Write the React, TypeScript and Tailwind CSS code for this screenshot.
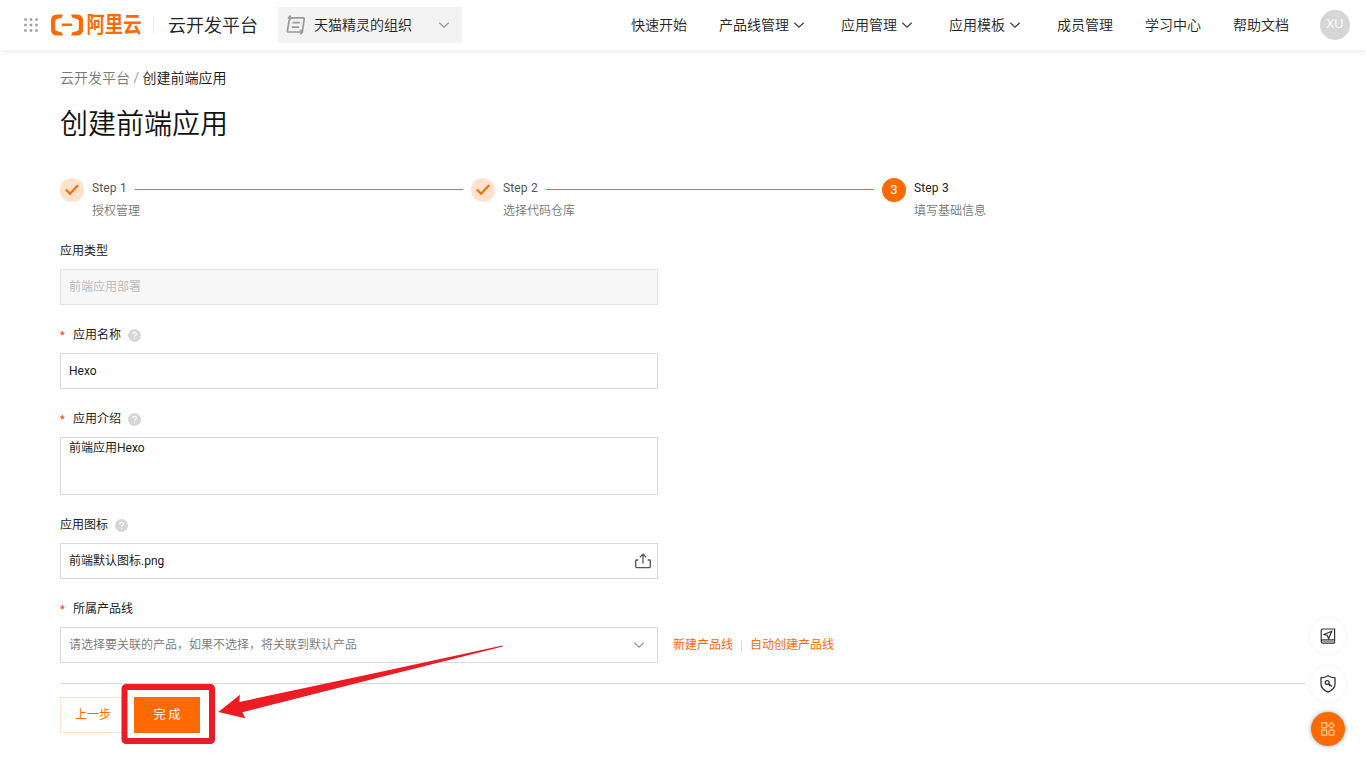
import type { ReactNode } from 'react'

const navItems = [
    { label: '快速开始', menu: false },
    { label: '产品线管理', menu: true },
    { label: '应用管理', menu: true },
    { label: '应用模板', menu: true },
    { label: '成员管理', menu: false },
    { label: '学习中心', menu: false },
    { label: '帮助文档', menu: false },
]

const steps = [
    { title: 'Step 1', desc: '授权管理', done: true },
    { title: 'Step 2', desc: '选择代码仓库', done: true },
    { title: 'Step 3', desc: '填写基础信息', done: false },
]

const dots = [1.5, 7, 12.5]

const Chevron = ({ className }: { className: string }) => (
    <svg className={className} width="12" height="8" viewBox="0 0 12 8" fill="none" stroke="currentColor" strokeWidth="1.3">
        <path d="M1.3 1.7 6 6.200l4.700-4.500" />
    </svg>
)

const Help = () => (
    <svg className="ml-[7px]" width="13" height="13" viewBox="0 0 13 13" fill="none">
        <circle cx="6.5" cy="6.5" r="6.5" fill="#d6d6d6" />
        <path d="M4.7 5.2c0-2.4 3.7-2.3 3.7-.2 0 1.3-1.8 1.4-1.8 2.8" stroke="#fff" strokeWidth="1.2" />
        <circle cx="6.6" cy="9.6" r=".7" fill="#fff" />
    </svg>
)

const Header = () => {
    return (
        <header className="flex h-[50px] items-center bg-white pl-6 pr-4 font-[350] shadow-[0_2px_6px_rgba(0,0,0,0.08)]">
            <svg width="14" height="14" viewBox="0 0 14 14" fill="#9b9b9b">
                {dots.map((y) => dots.map((x) => <rect key={`${x}-${y}`} x={x - 1.3} y={y - 1.3} width="2.6" height="2.6" rx=".9" />))}
            </svg>
            <svg className="ml-[13px]" width="32" height="22" viewBox="0 0 32 22" fill="#ff6a00">
                <path d="M12 .5H5.500A5.500 5.500 0 0 0 0 6v10a5.500 5.500 0 0 0 5.500 5.500H12l-1.400-3.200-4.600-1.200A2.300 2.300 0 0 1 4.200 15V7A2.300 2.300 0 0 1 6 4.900l4.600-1.200z" />
                <path d="M20 .5h6.500A5.500 5.500 0 0 1 32 6v10a5.500 5.500 0 0 1-5.500 5.500H20l1.400-3.200 4.600-1.200a2.300 2.300 0 0 0 1.800-2.100V7A2.300 2.300 0 0 0 26 4.900l-4.600-1.200z" />
                <rect x="10.800" y="9.500" width="10.400" height="2.600" />
            </svg>
            <div className="ml-1 text-[18px] leading-6 font-bold text-[#ff6a00]">
                <span className="inline-block scale-x-[1.02] scale-y-[1.18]">阿里云</span>
            </div>
            <div className="ml-3 h-4 w-px bg-[#ececec]" />
            <div className="ml-3.5 pt-px text-[18px] leading-6 text-[#222]">云开发平台</div>
            <div className="ml-5 flex h-9 w-[184px] items-center bg-[#f3f3f3] pl-2 pr-3 text-sm text-[#222]">
                <svg width="20" height="20" viewBox="0 0 20 20" fill="none" stroke="#999" strokeWidth="1.700" strokeLinejoin="round">
                    <path d="M4.700.7 2.500 2.900l2.200 2.100M2.700 2.900h14.500q1.200 0 1 1.200l-1.900 12.900M6.500 7.700h7.200M5.700 12.200H13M3.200 5 1.400 15.800q-.2 1.200 1 1.200h14M14.300 14.900l2.200 2.100-2.200 2.200" />
                </svg>
                <span className="ml-2">天猫精灵的组织</span>
                <Chevron className="ml-auto text-[#999]" />
            </div>
            <nav className="ml-auto flex items-center gap-8 text-sm text-[#222]">
                {navItems.map((item) => (
                    <div key={item.label} className="flex items-center">
                        {item.label}
                        {item.menu && <Chevron className="mx-1 text-[#444]" />}
                    </div>
                ))}
            </nav>
            <div className="ml-[31px] h-[30px] w-[30px] rounded-full bg-[#d6d6d6] text-center font-['Open_Sans',sans-serif] text-[13px] leading-[27px] font-normal text-white">XU</div>
        </header>
    )
}

const Steps = () => {
    return (
        <div className="mt-8 flex">
            {steps.map((step, i) => (
                <div key={step.title} className="flex w-[411px] items-start">
                    {step.done ? (
                        <div className="mt-px flex h-6 w-6 shrink-0 items-center justify-center rounded-full bg-[#ffe1cc]">
                            <svg width="14" height="12" viewBox="0 0 14 12" fill="none" stroke="#ff6a00" strokeWidth="2.200" strokeLinecap="round">
                                <path d="m1.500 6.200 3.600 3.500 7.400-8" />
                            </svg>
                        </div>
                    ) : (
                        <div className="mt-px h-6 w-6 shrink-0 rounded-full bg-[#ff6a00] text-center text-[13px] leading-6 text-white">{i + 1}</div>
                    )}
                    <div className="ml-2 flex-1">
                        <div className="flex h-[22px] items-center">
                            <span className={step.done ? 'tracking-[0.15px] text-[#555]' : 'tracking-[0.15px] text-[#222]'}>{step.title}</span>
                            {step.done && <div className="mx-2 mt-[3px] h-px flex-1 bg-[#ff6a00]" />}
                        </div>
                        <div className="leading-6 font-[350] text-[#777]">{step.desc}</div>
                    </div>
                </div>
            ))}
        </div>
    )
}

type FieldProps = { label: string; required?: boolean; help?: boolean; children: ReactNode }

const Field = ({ label, required, help, children }: FieldProps) => {
    return (
        <div className="mb-5">
            <div className="mb-2 flex h-5 items-center text-[#222]">
                {required && <span className="mr-2 w-[5px] pt-0.5 text-[11px] text-[#ff3000]">*</span>}
                {label}
                {help && <Help />}
            </div>
            {children}
        </div>
    )
}

const Form = () => {
    return (
        <div className="mt-[18px]">
            <Field label="应用类型">
                <div className="flex h-9 w-[598px] items-center border border-[#e3e3e3] bg-[#f7f7f7] px-2 text-[#bbb]">前端应用部署</div>
            </Field>
            <Field label="应用名称" required help>
                <div className="flex h-9 w-[598px] items-center border border-[#d9d9d9] px-2 text-[#222]">Hexo</div>
            </Field>
            <Field label="应用介绍" required help>
                <div className="h-[58px] w-[598px] border border-[#d9d9d9] px-2 leading-5 text-[#222]">前端应用Hexo</div>
            </Field>
            <Field label="应用图标" help>
                <div className="flex h-9 w-[598px] items-center justify-between border border-[#d9d9d9] pl-2 pr-1.5 text-[#222]">
                    前端默认图标.png
                    <svg width="16" height="16" viewBox="0 0 16 16" fill="none" stroke="#555" strokeWidth="1.300">
                        <path d="M3.300 7H1.500A.8.800 0 0 0 .7 7.800v5.700c0 .7.400 1.100 1.100 1.100h12.400c.7 0 1.100-.4 1.100-1.100V7.800a.8.800 0 0 0-.8-.8h-1.800M8 10.500V1.200M4.900 4.200 8 1.100l3.100 3.100" />
                    </svg>
                </div>
            </Field>
            <Field label="所属产品线" required>
                <div className="flex items-center">
                    <div className="flex h-9 w-[598px] items-center justify-between border border-[#d9d9d9] pl-2 pr-3 font-[350] text-[#777]">
                        请选择要关联的产品，如果不选择，将关联到默认产品
                        <Chevron className="text-[#999]" />
                    </div>
                    <a className="ml-[15px] text-[#ff6a00]">新建产品线</a>
                    <div className="mx-2 mt-0.5 h-3 w-px bg-[#d9d9d9]" />
                    <a className="text-[#ff6a00]">自动创建产品线</a>
                </div>
            </Field>
        </div>
    )
}

const Marker = () => {
    return (
        <svg className="pointer-events-none absolute left-[118px] top-[640px]" width="390" height="108" viewBox="118 640 390 108">
            <rect x="124.500" y="687" width="87.500" height="54" rx="1.500" fill="none" stroke="#ed1c24" strokeWidth="6" />
            <path d="M218.300 712 240 694.700l-.7 7.300L380 672l122.500-26.500.5 1L380 677.300l-137.600 35 2.900 5.900z" fill="#ed1c24" />
        </svg>
    )
}

const FloatingTools = () => {
    return (
        <div className="absolute top-[618px] right-5 flex flex-col items-center">
            <div className="flex h-9 w-9 items-center justify-center rounded-full bg-white shadow-[0_0_4px_rgba(0,0,0,0.07)]">
                <svg width="16" height="16" viewBox="0 0 16 16" fill="none" stroke="#333" strokeWidth="1.200">
                    <path d="M14.600 11.800V1H3C1.800 1 1.200 1.600 1.200 2.800v10.700c0 1 .6 1.700 1.800 1.700h11.600M1.200 13.300c0-1 .7-1.500 1.800-1.500h11.600v3.400" />
                    <path d="M2.500 13.500h12" stroke="#999" />
                    <path d="m11.700 3.300-7.600 3.200 3.300 1 1.200 3.300z" />
                </svg>
            </div>
            <div className="mt-3 flex h-9 w-9 items-center justify-center rounded-full bg-white shadow-[0_0_4px_rgba(0,0,0,0.07)]">
                <svg width="16" height="18" viewBox="0 0 16 18" fill="none" stroke="#333" strokeWidth="1.300">
                    <path d="M8 .8c2 1.300 4.300 2 7 2.100v6.300c0 3.600-2.600 6-7 8-4.400-2-7-4.400-7-8V2.900C3.700 2.800 6 2.100 8 .8z" />
                    <circle cx="7.200" cy="7.500" r="1.900" />
                    <path d="m8.600 8.800 3.400 2.800M10 10l-.8 1" />
                </svg>
            </div>
            <div className="mt-2.5 flex h-[34px] w-[34px] items-center justify-center rounded-full bg-[#ff6a00] shadow-[0_0_4px_rgba(0,80,130,0.5)]">
                <svg width="14" height="14" viewBox="0 0 14 14" fill="none" stroke="#ffc18c" strokeWidth="1.400">
                    <rect x=".7" y=".7" width="5" height="5" rx=".5" />
                    <path d="m10.500.5 2.900 2.900-2.900 2.900-2.900-2.900z" />
                    <rect x=".7" y="8.300" width="5" height="5" rx=".5" />
                    <rect x="8.100" y="8.300" width="5" height="5" rx="1" />
                </svg>
            </div>
        </div>
    )
}

const App = () => {
    return (
        <div className="relative h-screen overflow-hidden bg-white font-[Roboto,'Noto_Sans_CJK_SC',sans-serif] text-xs">
            <Header />
            <main className="px-[60px] pt-[18px]">
                <div className="text-sm leading-5 font-[350] text-[#777]">
                    云开发平台 / <span className="text-[#111]">创建前端应用</span>
                </div>
                <h1 className="mt-[17px] text-[28px] leading-[40px] font-[350] text-[#111]">创建前端应用</h1>
                <Steps />
                <Form />
                <div className="flex border-t border-[#d9d9d9] pt-[13px]">
                    <button className="h-9 w-[66px] border border-[#ffe1cc] text-[#ff6a00]">上一步</button>
                    <button className="ml-2 h-9 w-[66px] bg-[#ff6a00] text-white">完 成</button>
                </div>
            </main>
            <Marker />
            <FloatingTools />
        </div>
    )
}

export default App
